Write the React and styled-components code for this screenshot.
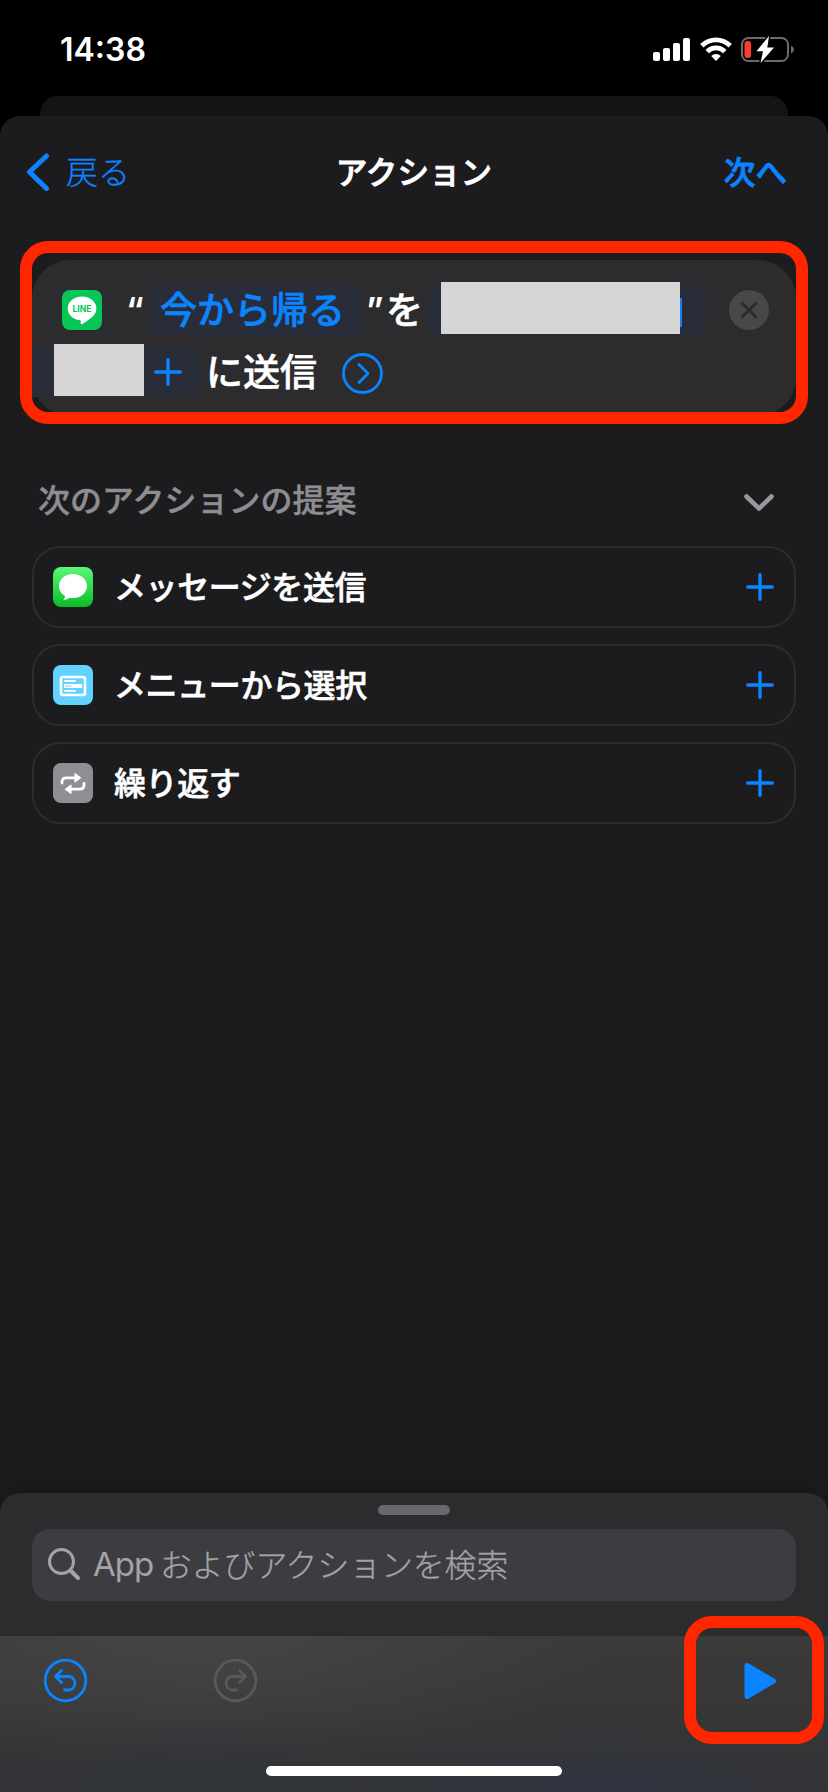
import React from 'react';
import styled, { createGlobalStyle } from 'styled-components';

const GlobalStyle = createGlobalStyle`
  * {
    box-sizing: border-box;
  }
  body {
    margin: 0;
    background: #000;
  }
`
const Screen = styled.div`
  width: 828px;
  height: 1792px;
  overflow: hidden;
  display: flex;
  flex-direction: column;
  background: #000;
  color: #fff;
  font-family: Inter, "Noto Sans CJK JP", sans-serif;
  font-size: 32px;
`
const Icon = styled.svg`
  flex: none;
  margin: ${p => p.$margin || 0};
`
const StatusBar = styled.div`
  height: 96px;
  padding: 0 33px 0 60px;
  display: flex;
  justify-content: space-between;
`
const Time = styled.span`
  margin-top: 30px;
  font-size: 32px;
  line-height: 40px;
  font-weight: 600;
`
const StatusIcons = styled.div`
  display: flex;
  align-items: flex-start;
  margin-top: 36px;
`
const BackSheet = styled.div`
  height: 20px;
  margin: 0 40px;
  border-radius: 18px 18px 0 0;
  background: #141415;
`
const Sheet = styled.div`
  flex: 1;
  display: flex;
  flex-direction: column;
  border-radius: 20px 20px 0 0;
  background: #1c1c1e;
`
const NavBar = styled.div`
  height: 112px;
  padding: 0 26px;
  display: grid;
  grid-template-columns: 1fr auto 1fr;
  align-items: center;
`
const BackButton = styled.div`
  display: flex;
  align-items: center;
  gap: 16px;
  color: #0a84ff;
  font-weight: 300;
  -webkit-text-stroke: 0.3px;
`
const BackLabel = styled.span`
  padding-bottom: 4px;
`
const Title = styled.div`
  padding-bottom: 5px;
  font-size: 31.6px;
  font-weight: 500;
  -webkit-text-stroke: 0.8px;
`
const NextButton = styled.div`
  padding: 0 15px 5px 0;
  color: #0a84ff;
  font-size: 31.6px;
  font-weight: 500;
  -webkit-text-stroke: 0.8px;
  text-align: right;
`
const ActionCard = styled.div`
  position: relative;
  height: 156px;
  margin: 32px 32px 0;
  padding-top: 25px;
  border-radius: 38px;
  background: #2c2c2e;
  font-size: 37px;
  font-weight: 500;
  -webkit-text-stroke: 0.6px;
`
const Highlight = styled.div`
  position: absolute;
  top: ${p => p.$top}px;
  right: ${p => p.$right}px;
  width: ${p => p.$width}px;
  height: ${p => p.$height}px;
  border: 12px solid #ff2600;
  border-radius: ${p => p.$radius}px;
`
const CardLine = styled.div`
  height: 61px;
  display: flex;
  align-items: flex-start;
  line-height: ${p => p.$lineHeight || 51}px;
  white-space: nowrap;
`
const Quote = styled.span`
  width: ${p => p.$width}px;
  padding-left: ${p => p.$pad || 0}px;
  font-size: 35px;
  font-weight: 600;
  -webkit-text-stroke: 0;
`
const Particle = styled.span`
  width: ${p => p.$width}px;
`
const Token = styled.span`
  display: flex;
  align-items: center;
  width: ${p => p.$width}px;
  height: 51px;
  padding-left: ${p => p.$pad}px;
  border-radius: ${p => p.$corners || '12px'};
  background: #282d39;
  color: #0a84ff;
`
const Redacted = styled.span`
  flex: none;
  align-self: flex-start;
  width: ${p => p.$width}px;
  height: 52px;
  margin-top: -${p => p.$lift}px;
  background: #d6d6d6;
`
const Caret = styled.span`
  width: 2px;
  height: 29px;
  margin-top: 4px;
  background: #0a84ff;
`
const SectionHeader = styled.div`
  height: 130px;
  padding: 41px 53px 0 38px;
  display: flex;
  justify-content: space-between;
  color: #8d8d92;
  font-weight: 500;
  -webkit-text-stroke: 0.4px;
  line-height: 88px;
`
const Suggestions = styled.div`
  flex: 1;
  padding: 0 32px;
  display: flex;
  flex-direction: column;
  gap: 16px;
`
const SuggestionRow = styled.div`
  height: 82px;
  padding: 0 20px 0 19px;
  display: flex;
  align-items: center;
  gap: 21px;
  border: 2px solid #2d2d2f;
  border-radius: 28px;
  font-weight: 500;
`
const RowLabel = styled.span`
  flex: 1;
  padding-bottom: 4px;
  letter-spacing: -0.4px;
  -webkit-text-stroke: 0.6px;
`
const Drawer = styled.div`
  height: 299px;
  display: flex;
  flex-direction: column;
  border-radius: 20px 20px 0 0;
  background: #2c2c2e;
  box-shadow: 0 -6px 20px rgba(0, 0, 0, 0.18);
`
const Grabber = styled.div`
  width: 72px;
  height: 10px;
  margin: 12px auto 14px;
  border-radius: 5px;
  background: #68686c;
`
const SearchField = styled.div`
  height: 72px;
  margin: 0 32px 35px;
  padding-left: 15px;
  display: flex;
  align-items: center;
  border-radius: 18px;
  background: #3d3d41;
  color: #a3a3a9;
  font-weight: 300;
`
const Latin = styled.span`
  width: 67px;
  margin-left: 12px;
  padding-bottom: 2px;
  font-size: 33px;
  font-weight: 400;
  letter-spacing: -1px;
`
const Placeholder = styled.span`
  padding-bottom: 5px;
  font-size: 31.8px;
  -webkit-text-stroke: 0.3px;
`
const Toolbar = styled.div`
  position: relative;
  flex: 1;
  padding: 23px 51px 0 43px;
  display: flex;
  align-items: flex-start;
  background:
    radial-gradient(ellipse 260px 60px at 600px 156px, rgba(46, 52, 68, 0.8), rgba(46, 52, 68, 0)),
    radial-gradient(ellipse 300px 70px at 210px 156px, rgba(46, 52, 56, 0.8), rgba(46, 52, 56, 0)),
    radial-gradient(ellipse 420px 130px at 200px 0, rgba(72, 72, 74, 0.8), rgba(72, 72, 74, 0)),
    linear-gradient(#3a3a3b, #333335);
`
const Spacer = styled.span`
  flex: ${p => (p.$width ? 'none' : 1)};
  width: ${p => p.$width || 0}px;
`
const HomeIndicator = styled.div`
  position: absolute;
  left: 266px;
  bottom: 16px;
  width: 296px;
  height: 10px;
  border-radius: 5px;
  background: #fff;
`

const Signal = () => (
  <Icon width="38" height="26" viewBox="0 0 38 26" fill="#fff">
    <rect x="0" y="16" width="7" height="9" rx="2" />
    <rect x="10" y="12" width="7" height="13" rx="2" />
    <rect x="20" y="7" width="7" height="18" rx="2" />
    <rect x="30" y="2" width="7" height="23" rx="2" />
  </Icon>
)

const Wifi = () => (
  <Icon $margin="0 0 0 9px" width="32" height="26" viewBox="0 0 32 26" fill="none" stroke="#fff" strokeWidth="4.8">
    <path d="M1.8 9.8 A20 20 0 0 1 30.2 9.8" />
    <path d="M7.2 15.6 A12.4 12.4 0 0 1 24.8 15.6" />
    <path d="M11.2 20 A6.8 6.8 0 0 1 20.8 20 L16 25 Z" fill="#fff" stroke="none" />
  </Icon>
)

const Battery = () => (
  <Icon $margin="-1px 0 0 9px" width="54" height="30" viewBox="0 0 54 30">
    <rect x="1" y="3" width="46" height="23" rx="6.5" fill="none" stroke="#6b6b6b" strokeWidth="2" />
    <path d="M50 10.5 Q53 12 53 14.5 Q53 17 50 18.5 Z" fill="#6b6b6b" />
    <rect x="3.5" y="6" width="6.5" height="17" rx="3" fill="#ff3b30" />
    <path d="M28 1 L15.5 16.3 H22 L19.5 28 L33 12.5 H26.3 Z" fill="#fff" stroke="#000" strokeWidth="3" paintOrder="stroke" />
  </Icon>
)

const Plus = () => (
  <Icon width="28" height="28" viewBox="0 0 28 28" fill="none" stroke="#0a84ff" strokeWidth="3.4" strokeLinecap="round">
    <path d="M14 1.7 V26.3 M1.7 14 H26.3" />
  </Icon>
)

const MessageIcon = () => (
  <Icon width="40" height="40" viewBox="0 0 40 40">
    <defs>
      <linearGradient id="green" x1="0" y1="0" x2="0" y2="1">
        <stop offset="0" stopColor="#5df777" />
        <stop offset="1" stopColor="#0abc28" />
      </linearGradient>
    </defs>
    <rect width="40" height="40" rx="8" fill="url(#green)" />
    <path d="M20 7 C12 7 6 12.2 6 19 C6 23.2 8.4 26.8 12 29 C12 31 11 32.3 10 33.2 C12.8 33 15 32 16.5 30.8 C17.6 31 18.8 31.1 20 31.1 C28 31.1 34 25.7 34 19 C34 12.2 28 7 20 7 Z" fill="#fff" />
  </Icon>
)

const MenuIcon = () => (
  <Icon width="40" height="40" viewBox="0 0 40 40">
    <rect width="40" height="40" rx="8" fill="#64d2ff" />
    <rect x="8" y="12" width="24" height="18" rx="2" fill="none" stroke="#fff" strokeWidth="2.6" />
    <path d="M12 16 H22 M12 25.8 H22" stroke="#fff" strokeWidth="1.8" strokeLinecap="round" />
    <path d="M11 19 H29 V23 H11 Z" fill="#fff" />
    <path d="M12 21 H18.500" stroke="#64d2ff" strokeWidth="1" />
  </Icon>
)

const RepeatIcon = () => (
  <Icon width="40" height="40" viewBox="0 0 40 40" fill="none" stroke="#fff" strokeWidth="2.8" strokeLinecap="round" strokeLinejoin="round">
    <rect width="40" height="40" rx="8" fill="#8e8e93" stroke="none" />
    <path d="M9 20 V19 Q9 14.8 13.2 14.8 H22 M31 20.5 V22 Q31 26.2 26.8 26.2 H18" />
    <path d="M22 10.8 L27.5 14.8 L22 18.8 Z M18 22.2 L12.5 26.2 L18 30.2 Z" fill="#fff" strokeWidth="1.2" />
  </Icon>
)

const LineIcon = () => (
  <Icon $margin="5px 24px 0 30px" width="40" height="40" viewBox="0 0 40 40">
    <rect width="40" height="40" rx="8" fill="#06c755" />
    <path d="M20 6.5 C12 6.5 5.7 11.8 5.7 18.4 C5.7 24.3 10.8 29.2 17.5 30.1 C19 30.4 18.9 31.2 18.7 33.2 C18.6 34.3 19.2 34.6 20.3 34 C23 32.5 29 28.7 32 25 C33.6 23 34.4 20.8 34.4 18.4 C34.4 11.8 28 6.5 20 6.5 Z" fill="#fff" />
    <text x="20" y="21.6" textAnchor="middle" fontFamily="Inter, sans-serif" fontSize="8.6" fontWeight="700" fill="#06c755">LINE</text>
  </Icon>
)

const UndoIcon = ({ color, flip }) => (
  <Icon width="45" height="45" viewBox="0 0 45 45" fill="none" stroke={color} strokeWidth="2.8" strokeLinecap="round" strokeLinejoin="round">
    <g transform={flip ? 'translate(45 0) scale(-1 1)' : undefined}>
      <circle cx="22.5" cy="21.5" r="20.3" />
      <path d="M18.500 11.500 L12.500 17.500 L18.500 23.500 M12.500 17.500 H26 A6.800 6.800 0 0 1 26 31 H21.500" />
    </g>
  </Icon>
)

const suggestions = [
  { label: 'メッセージを送信', icon: <MessageIcon /> },
  { label: 'メニューから選択', icon: <MenuIcon /> },
  { label: '繰り返す', icon: <RepeatIcon /> },
]

const App = () => (
  <Screen>
    <GlobalStyle />
    <StatusBar>
      <Time>14:38</Time>
      <StatusIcons>
        <Signal />
        <Wifi />
        <Battery />
      </StatusIcons>
    </StatusBar>
    <BackSheet />
    <Sheet>
      <NavBar>
        <BackButton>
          <Icon width="24" height="38" viewBox="0 0 24 38" fill="none" stroke="#0a84ff" strokeWidth="5" strokeLinecap="round" strokeLinejoin="round">
            <path d="M20.5 3 L3.5 19 L20.5 35.5" />
          </Icon>
          <BackLabel>戻る</BackLabel>
        </BackButton>
        <Title>アクション</Title>
        <NextButton>次へ</NextButton>
      </NavBar>
      <ActionCard>
        <CardLine>
          <LineIcon />
          <Quote $width={24}>“</Quote>
          <Token $width={211} $pad={10}>今から帰る</Token>
          <Quote $width={25} $pad={5}>”</Quote>
          <Particle $width={43}>を</Particle>
          <Token $width={276} $pad={12}>
            <Redacted $width={239} $lift={3} />
            <Caret />
          </Token>
          <Icon $margin="5px 0 0 24px" width="40" height="40" viewBox="0 0 40 40">
            <circle cx="20" cy="20" r="20" fill="#48484a" />
            <path d="M13.2 13.2 L26.8 26.8 M26.8 13.2 L13.2 26.8" stroke="#2c2c2e" strokeWidth="3" strokeLinecap="round" />
          </Icon>
        </CardLine>
        <CardLine $lineHeight={54}>
          <Token $width={167} $pad={22} $corners="0 12px 12px 0">
            <Redacted $width={90} $lift={2} />
            <Spacer $width={10} />
            <Plus />
          </Token>
          <Spacer $width={7} />
          <span>に送信</span>
          <Icon $margin="7px 0 0 25px" width="41" height="41" viewBox="0 0 41 41" fill="none" stroke="#0a84ff" strokeWidth="2.8" strokeLinecap="round" strokeLinejoin="round">
            <circle cx="20.5" cy="20.5" r="19" />
            <path d="M17 11.5 L26 20.5 L17 29.5" />
          </Icon>
        </CardLine>
        <Highlight $top={-19} $right={-12} $width={788} $height={183} $radius={28} />
      </ActionCard>
      <SectionHeader>
        次のアクションの提案
        <Icon $margin="36px 0 0" width="32" height="20" viewBox="0 0 32 20" fill="none" stroke="#98989d" strokeWidth="4.6" strokeLinecap="round" strokeLinejoin="round">
          <path d="M3.5 3.5 L16 15.5 L28.5 3.5" />
        </Icon>
      </SectionHeader>
      <Suggestions>
        {suggestions.map(({ label, icon }) => (
          <SuggestionRow key={label}>
            {icon}
            <RowLabel>{label}</RowLabel>
            <Plus />
          </SuggestionRow>
        ))}
      </Suggestions>
      <Drawer>
        <Grabber />
        <SearchField>
          <Icon width="34" height="34" viewBox="0 0 34 34" fill="none" stroke="#a3a3a9" strokeLinecap="round">
            <circle cx="14.5" cy="13.5" r="12" strokeWidth="3" />
            <path d="M23.5 22.5 L31 30" strokeWidth="4" />
          </Icon>
          <Latin>App</Latin>
          <Placeholder>およびアクションを検索</Placeholder>
        </SearchField>
        <Toolbar>
          <UndoIcon color="#0a84ff" />
          <Spacer $width={125} />
          <UndoIcon color="#59595b" flip />
          <Spacer />
          <Icon $margin="3px 0 0" width="33" height="38" viewBox="0 0 33 38" fill="#0a84ff" stroke="#0a84ff" strokeWidth="5" strokeLinejoin="round">
            <path d="M3 3.5 V34.5 L29.5 19 Z" />
          </Icon>
          <Highlight $top={-20} $right={4} $width={140} $height={128} $radius={28} />
          <HomeIndicator />
        </Toolbar>
      </Drawer>
    </Sheet>
  </Screen>
)

export default App;
